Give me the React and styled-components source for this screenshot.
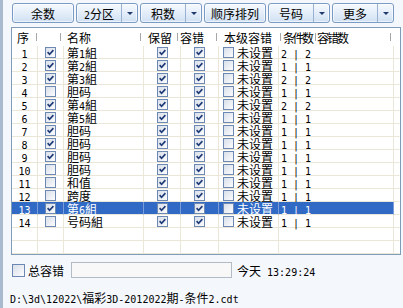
import React from "react";
import styled, { createGlobalStyle } from "styled-components";

const GlobalStyle = createGlobalStyle`
  html, body {
    margin: 0;
    padding: 0;
    background: #f4f7fb;
  }
  body {
    width: 403px;
    height: 308px;
    overflow: hidden;
    font-family: "Noto Sans CJK SC", sans-serif;
    font-size: 12px;
    color: #000;
  }
`;

const Text = styled.span`
  display: inline-block;
  height: 13px;
  line-height: 13px;
  white-space: pre;
  letter-spacing: ${(p) => p.$track || 0}px;
`;

const Han = styled.span`
  font-family: "Noto Sans CJK SC", sans-serif;
  font-size: 12px;
`;

const Latin = styled.span`
  font-family: "DejaVu Sans Mono", monospace;
  font-size: 10px;
  letter-spacing: 0;
`;

// SimSun-ish mix: CJK runs at 12px, ascii at half width
const CJK_RUN = /([\u3000-\u9fff\uff00-\uffef]+)/;
const Mixed = ({ text, track }) => (
  <Text $track={track}>
    {text.split(CJK_RUN).map((part, i) =>
      i % 2 ? <Han key={i}>{part}</Han> : part ? <Latin key={i}>{part}</Latin> : null
    )}
  </Text>
);

const Window = styled.div`
  box-sizing: border-box;
  width: 403px;
  height: 308px;
  border-left: 3px solid #a9b9ce;
  background: #f4f7fb;
  padding: 3px 0 0 7px;
  display: flex;
  flex-direction: column;
`;

const Toolbar = styled.div`
  display: flex;
  gap: 2px;
  margin-left: 2px;
  height: 20px;
`;

const Button = styled.div`
  box-sizing: border-box;
  width: 62px;
  height: 20px;
  display: flex;
  border: 1px solid #7a9bc4;
  border-radius: 3px;
  background: linear-gradient(#f5f9fe, #e4eef9 50%, #cfe0f3);
  box-shadow: inset 0 0 0 1px rgba(255, 255, 255, 0.6);
`;

const Caption = styled.span`
  flex: 1;
  display: flex;
  align-items: center;
  justify-content: center;
`;

const Drop = styled.span`
  width: 15px;
  border-left: 1px solid #9ab2d2;
  display: flex;
  align-items: center;
  justify-content: center;
`;

const Arrow = styled.span`
  width: 0;
  height: 0;
  border-left: 3px solid transparent;
  border-right: 3px solid transparent;
  border-top: 3px solid #1f3c6c;
`;

const Grid = styled.div`
  box-sizing: border-box;
  margin: 4px 0 0 1px;
  width: 390px;
  height: 228px;
  border: 1px solid #7f9db9;
  background: #fff;
`;

const HeaderRow = styled.div`
  display: grid;
  grid-template-columns: 25px 24px 80px 37px 39px 64px 35px 75px 1fr;
  height: 18px;
`;

const HeadCell = styled.div`
  display: flex;
  align-items: center;
  padding-left: ${(p) => p.$pad || 0}px;
  white-space: nowrap;
  background: ${(p) =>
    p.$plain ? "none" : "linear-gradient(#a8a8a8, #a8a8a8) right 5px / 1px 8px no-repeat"};
`;

const Row = styled.div`
  display: grid;
  grid-template-columns: 26px 26px 80px 37px 38px 60px 115px 1fr;
  height: 13px;
  color: ${(p) => (p.$selected ? "#fff" : "#000")};
`;

const Cell = styled.div`
  box-sizing: border-box;
  height: 13px;
  border-right: 1px solid ${(p) => (p.$last ? "transparent" : p.$selected ? "#7b9cdb" : "#ebe7d8")};
  border-bottom: 1px solid #ebe7d8;
  background: ${(p) => (p.$selected && !p.$last ? "#316ac5" : "transparent")};
  display: flex;
  align-items: center;
  justify-content: ${(p) => (p.$center ? "center" : "flex-start")};
  padding-left: ${(p) => p.$pad || 0}px;
  gap: 3px;
  white-space: nowrap;
`;

const Box = styled.span`
  box-sizing: border-box;
  flex: none;
  width: ${(p) => p.$size}px;
  height: ${(p) => p.$size}px;
  border: 1px solid #6c88b3;
  background: linear-gradient(135deg, #d9e0ea, #fbfcfd);
  display: flex;
  align-items: center;
  justify-content: center;
`;

const Check = ({ on, size = 11 }) => (
  <Box $size={size}>
    {on && (
      <svg width="7" height="7" viewBox="0 0 7 7">
        <path d="M0.6 3.2 L2.6 5.3 L6.4 1.2" fill="none" stroke="#1f3b78" strokeWidth="1.7" />
      </svg>
    )}
  </Box>
);

const StatusLine = styled.div`
  display: flex;
  align-items: center;
  height: 16px;
  margin: 7px 0 0 2px;
`;

const Label = styled.span`
  margin-left: 3px;
`;

const TextBox = styled.div`
  box-sizing: border-box;
  width: 161px;
  height: 16px;
  margin-left: 7px;
  border: 1px solid #b3bcc6;
  background: #f8f8f8;
`;

const Clock = styled.span`
  margin-left: 5px;
`;

const PathLine = styled.div`
  margin-top: 11px;
  height: 13px;
`;

const rows = [
  { on: true, name: "第1組", cnt: "2 | 2" },
  { on: true, name: "第2組", cnt: "1 | 1" },
  { on: true, name: "第3組", cnt: "2 | 2" },
  { on: false, name: "胆码", cnt: "1 | 1" },
  { on: true, name: "第4組", cnt: "2 | 2" },
  { on: true, name: "第5組", cnt: "1 | 1" },
  { on: true, name: "胆码", cnt: "1 | 1" },
  { on: true, name: "胆码", cnt: "1 | 1" },
  { on: true, name: "胆码", cnt: "1 | 1" },
  { on: false, name: "胆码", cnt: "1 | 1" },
  { on: false, name: "和值", cnt: "1 | 1" },
  { on: false, name: "跨度", cnt: "1 | 1" },
  { on: true, name: "第6組", cnt: "1 | 1", selected: true },
  { on: false, name: "号码組", cnt: "1 | 1" },
];

const buttons = [
  { text: "余数" },
  { text: "2分区", drop: true },
  { text: "积数", drop: true },
  { text: "顺序排列" },
  { text: "号码", drop: true },
  { text: "更多", drop: true },
];

const headers = [
  { text: "序", pad: 5 },
  { text: "", pad: 0 },
  { text: "名称", pad: 6 },
  { text: "保留", pad: 7 },
  { text: "容错", pad: 2 },
  { text: "本级容错", pad: 7 },
  { text: "条件数", pad: 2, track: -2.5 },
  { text: "容错数", pad: 1, track: -2 },
];

const App = () => (
  <Window>
    <GlobalStyle />
    <Toolbar>
      {buttons.map((b) => (
        <Button key={b.text}>
          <Caption>
            <Mixed text={b.text} />
          </Caption>
          {b.drop && (
            <Drop>
              <Arrow />
            </Drop>
          )}
        </Button>
      ))}
    </Toolbar>

    <Grid>
      <HeaderRow>
        {headers.map((h, i) => (
          <HeadCell key={i} $pad={h.pad}>
            {h.text && <Mixed text={h.text} track={h.track} />}
          </HeadCell>
        ))}
        <HeadCell $plain />
      </HeaderRow>

      {rows.map((r, i) => {
        const s = r.selected;
        return (
          <Row key={i} $selected={s}>
            <Cell $selected={s} $center>
              <Mixed text={String(i + 1)} />
            </Cell>
            <Cell $selected={s} $center>
              <Check on={r.on} />
            </Cell>
            <Cell $selected={s} $pad={3}>
              <Mixed text={r.name} />
            </Cell>
            <Cell $selected={s} $center>
              <Check on />
            </Cell>
            <Cell $selected={s} $center>
              <Check on />
            </Cell>
            <Cell $selected={s} $pad={4}>
              <Check />
              <Mixed text="未设置" />
            </Cell>
            <Cell $selected={s} $pad={2}>
              <Mixed text={r.cnt} />
            </Cell>
            <Cell $selected={s} $last />
          </Row>
        );
      })}

      {[0, 1].map((k) => (
        <Row key={"e" + k}>
          {Array.from({ length: 8 }, (_, j) => (
            <Cell key={j} $last={j === 7} />
          ))}
        </Row>
      ))}
    </Grid>

    <StatusLine>
      <Check size={13} />
      <Label>
        <Mixed text="总容错" />
      </Label>
      <TextBox />
      <Clock>
        <Mixed text="今天 13:29:24" />
      </Clock>
    </StatusLine>

    <PathLine>
      <Mixed text={"D:\\3d\\12022\\福彩3D-2012022期-条件2.cdt"} />
    </PathLine>
  </Window>
);

export default App;
